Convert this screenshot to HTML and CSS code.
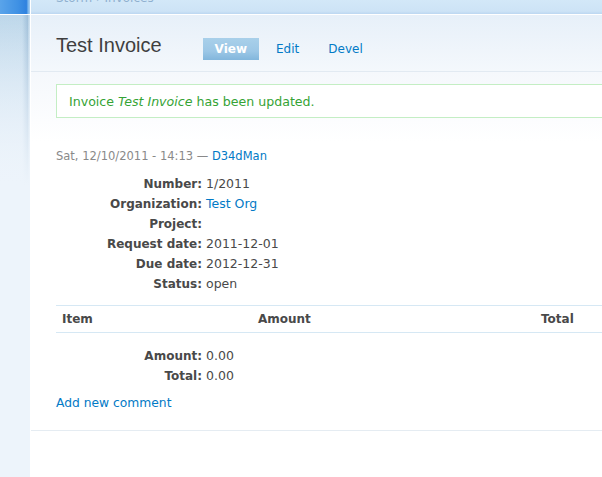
FILE: index.html
```html
<!DOCTYPE html>
<html lang="en">
<head>
<meta charset="utf-8">
<title>Test Invoice</title>
<link rel="stylesheet" href="styles.css">
</head>
<body>
<div class="page">
  <aside class="rail">
    <div class="rail-top"></div>
    <div class="rail-body"></div>
  </aside>
  <div class="main">
    <div class="topbar">
      <div class="crumbs"><a href="#">Storm</a> › <a href="#">Invoices</a></div>
    </div>
    <div class="head">
      <h2 class="title">Test Invoice</h2>
      <ul class="tabs">
        <li class="tab active"><a href="#">View</a></li>
        <li class="tab"><a href="#">Edit</a></li>
        <li class="tab"><a href="#">Devel</a></li>
      </ul>
    </div>
    <div class="content">
      <div class="msg">Invoice <em>Test Invoice</em> has been updated.</div>
      <div class="submitted">Sat, 12/10/2011 - 14:13 — <a href="#">D34dMan</a></div>
      <dl class="fields">
        <dt>Number:</dt><dd>1/2011</dd>
        <dt>Organization:</dt><dd><a href="#">Test Org</a></dd>
        <dt>Project:</dt><dd></dd>
        <dt>Request date:</dt><dd>2011-12-01</dd>
        <dt>Due date:</dt><dd>2012-12-31</dd>
        <dt>Status:</dt><dd>open</dd>
      </dl>
      <table class="items">
        <colgroup><col class="c-item"><col class="c-amount"><col class="c-total"></colgroup>
        <thead>
          <tr><th>Item</th><th>Amount</th><th>Total</th></tr>
        </thead>
      </table>
      <dl class="fields totals">
        <dt>Amount:</dt><dd>0.00</dd>
        <dt>Total:</dt><dd>0.00</dd>
      </dl>
      <div class="links"><a href="#">Add new comment</a></div>
    </div>
    <div class="foot"></div>
  </div>
</div>
</body>
</html>
```
FILE: styles.css
```css
html, body {
  margin: 0;
  padding: 0;
  overflow: hidden;
  background: #fff;
}
body {
  font-family: "DejaVu Sans", Verdana, sans-serif;
  font-size: 12px;
  color: #494949;
}
a {
  color: #027ac6;
  text-decoration: none;
}
.page {
  display: flex;
  width: 760px;
  min-height: 477px;
}
.rail {
  width: 30px;
  flex: none;
  display: flex;
  flex-direction: column;
}
.rail-top {
  height: 14px;
  border-bottom: 1px solid #fff;
  background: linear-gradient(to right, #5aa4ea 0, #3f91e4 60%, #2f82df 88%, #7ab6ec 94%, #a9cff2 100%);
}
.rail-body {
  flex: 1;
  background-color: #edf4fb;
  background-image:
    linear-gradient(to bottom, rgba(237,244,251,0) 0, #edf4fb 170px),
    linear-gradient(to right, rgba(120,160,195,0) 22px, rgba(120,160,195,.45) 28px, rgba(230,240,248,.6) 29px, rgba(255,255,255,0) 30px),
    linear-gradient(to bottom, #bdd7ea 0, #dbe9f5 110px, #edf4fb 180px);
  background-size: 30px 180px, 30px 180px, 30px 100%;
  background-repeat: no-repeat;
}
.main {
  flex: 1;
  border-left: 1px solid #fff;
  display: flex;
  flex-direction: column;
}
.topbar {
  height: 14px;
  overflow: hidden;
  border-bottom: 1px solid #fff;
  background: linear-gradient(to bottom, #d3e8f8 0, #cde3f6 80%, #bcd7f1 100%);
  padding-left: 25px;
}
.crumbs {
  margin-top: -9px;
  line-height: 14px;
  color: #8fb0cf;
}
.crumbs a {
  color: #8fb0cf;
}
.head {
  height: 56px;
  border-bottom: 1px solid #e2eaf2;
  background: linear-gradient(to bottom, #e7f0f9 0, #f4f8fc 100%);
  padding-left: 25px;
  display: flex;
  align-items: flex-start;
  gap: 41px;
}
.title {
  margin: 18px 0 0;
  font-family: "Liberation Sans", Arial, sans-serif;
  font-weight: normal;
  font-size: 20px;
  line-height: 24px;
  color: #3f3f3f;
}
.tabs {
  list-style: none;
  margin: 23px 0 0;
  padding: 0;
  display: flex;
  gap: 5px;
}
.tab a {
  display: block;
  padding: 1px 12px 0;
  line-height: 21px;
}
.tab.active a {
  color: #fff;
  font-weight: bold;
  background: linear-gradient(to bottom, #a9d0ea 0, #9cc7e6 60%, #82b6dc 100%);
}
.content {
  padding: 12px 26px 0 25px;
  background: linear-gradient(to bottom, #f5f8fc 0, #fff 70px);
}
.msg {
  border: 1px solid #c4eec4;
  background: #fff;
  color: #35a335;
  font-size: 12.6px;
  padding: 1px 12px 0;
  line-height: 31px;
}
.submitted {
  margin-top: 30px;
  font-size: 11.5px;
  line-height: 16px;
  color: #898989;
}
.fields {
  margin: 10px 0 0;
  display: grid;
  grid-template-columns: 146px 1fr;
  column-gap: 4px;
  line-height: 20px;
}
.fields dt {
  font-weight: bold;
  text-align: right;
}
.fields dd {
  margin: 0;
  min-height: 20px;
  font-size: 12.5px;
}
.items {
  margin-top: 11px;
  width: 100%;
  border-collapse: collapse;
  table-layout: fixed;
}
.c-item { width: 196px; }
.c-amount { width: 283px; }
.items th {
  text-align: left;
  font-weight: bold;
  padding: 1px 6px 0;
  line-height: 25px;
  border-top: 1px solid #d6e8f4;
  border-bottom: 1px solid #d6e8f4;
}
.totals {
  margin-top: 13px;
}
.links {
  margin-top: 7px;
  line-height: 20px;
  font-size: 12.3px;
}
.foot {
  margin-top: 17px;
  border-top: 1px solid #e5ecf2;
  flex: 1;
}
```
